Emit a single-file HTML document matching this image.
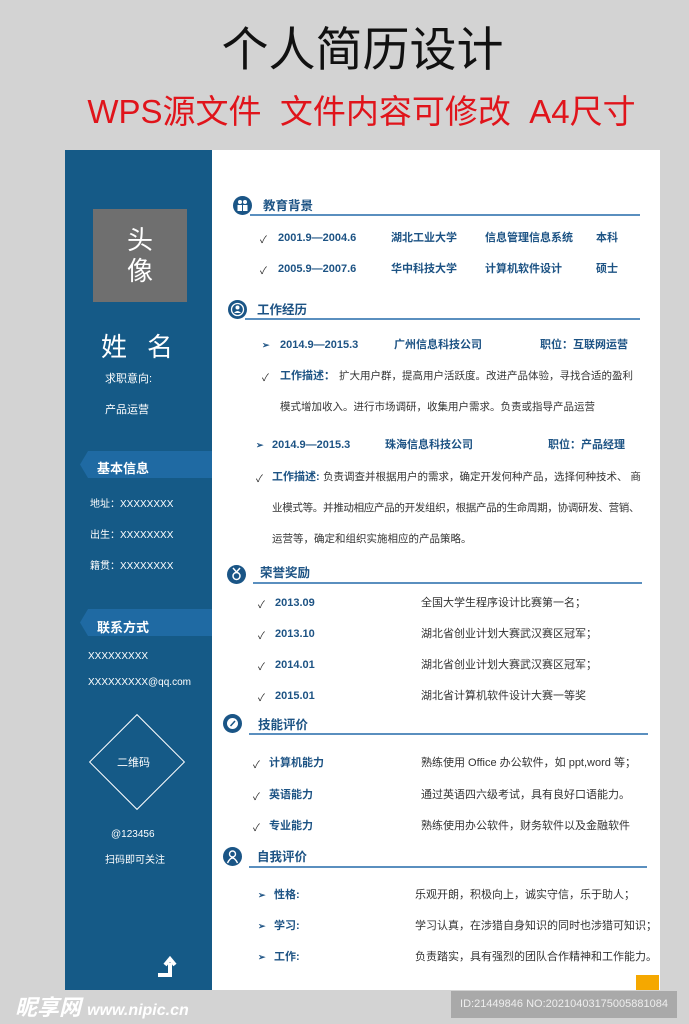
<!DOCTYPE html>
<html><head><meta charset="utf-8"><style>
*{margin:0;padding:0;box-sizing:border-box}
body{width:689px;height:1024px;background:#d3d3d3;position:relative;overflow:hidden;font-family:"Liberation Sans","Noto Sans CJK SC",sans-serif}
.a{position:absolute;white-space:nowrap}
.t{font-size:11px;color:#333;line-height:14px}
.b{font-weight:bold;color:#1d5384;font-size:11px;line-height:14px}
.w{color:#fff;font-size:10px;line-height:13px}
.h{font-weight:bold;color:#1d5384;font-size:12.5px;line-height:16px}
.ln{position:absolute;height:1.5px;background:#5a8fbf}
.ic{position:absolute;width:19px;height:19px;border-radius:50%;background:#1a5586}
.ic svg{position:absolute;left:0;top:0}
.ck{color:#222;font-size:10px}
.rib{position:absolute;left:80px;width:132px;height:27px;background:#1f6aa3;clip-path:polygon(8px 0,100% 0,100% 100%,8px 100%,0 50%)}
</style></head><body>
<div class="a" style="left:18px;width:689px;top:20px;text-align:center;font-size:47px;color:#111;line-height:60px">个人简历设计</div>
<div class="a" style="left:17px;width:689px;top:90px;text-align:center;font-size:33px;color:#e0141b;line-height:44px">WPS源文件&nbsp;&nbsp;文件内容可修改&nbsp;&nbsp;A4尺寸</div>

<div class="a" style="left:65px;top:150px;width:147px;height:840px;background:#155a87"></div>
<div class="a" style="left:212px;top:150px;width:448px;height:840px;background:#fff"></div>

<div class="a" style="left:93px;top:209px;width:94px;height:93px;background:#6f6f6f;color:#fff;font-size:26px;line-height:31px;text-align:center;padding-top:16px;white-space:normal">头<br>像</div>
<div class="a" style="left:101px;top:327px;color:#fff;font-size:26px;letter-spacing:20px">姓名</div>
<div class="a w" style="left:105px;top:373px;font-size:11px">求职意向:</div>
<div class="a w" style="left:105px;top:404px;font-size:11px">产品运营</div>
<div class="rib" style="top:451px"></div>
<div class="a" style="left:97px;top:458px;color:#fff;font-weight:bold;font-size:13px">基本信息</div>
<div class="a w" style="left:90px;top:498px">地址：XXXXXXXX</div>
<div class="a w" style="left:90px;top:529px">出生：XXXXXXXX</div>
<div class="a w" style="left:90px;top:560px">籍贯：XXXXXXXX</div>
<div class="rib" style="top:609px"></div>
<div class="a" style="left:97px;top:617px;color:#fff;font-weight:bold;font-size:13px">联系方式</div>
<div class="a w" style="left:88px;top:650px">XXXXXXXXX</div>
<div class="a w" style="left:88px;top:676px">XXXXXXXXX@qq.com</div>
<div class="a" style="left:103px;top:728px;width:68px;height:68px;border:1px solid #fff;transform:rotate(45deg)"></div>
<div class="a w" style="left:117px;top:757px;font-size:11px">二维码</div>
<div class="a w" style="left:111px;top:828px">@123456</div>
<div class="a w" style="left:105px;top:854px">扫码即可关注</div>
<svg class="a" style="left:155px;top:955px" width="24" height="24"><path d="M3 20 H15 V8 M10 10 L15 4 L20 10" stroke="#fff" stroke-width="4" fill="none"/></svg>

<!-- 教育背景 -->
<div class="ic" style="left:233px;top:196px"><svg width="19" height="19"><circle cx="7" cy="6" r="2" fill="#fff"/><circle cx="12" cy="6" r="2" fill="#fff"/><rect x="4.5" y="9" width="4.5" height="6" fill="#fff"/><rect x="10" y="9" width="4.5" height="6" fill="#fff"/></svg></div>
<div class="a h" style="left:263px;top:198px">教育背景</div>
<div class="ln" style="left:250px;top:214px;width:390px"></div>
<div class="a ck" style="left:260px;top:231px">✓</div>
<div class="a b" style="left:278px;top:231px">2001.9—2004.6</div>
<div class="a b" style="left:391px;top:231px">湖北工业大学</div>
<div class="a b" style="left:485px;top:231px">信息管理信息系统</div>
<div class="a b" style="left:596px;top:231px">本科</div>
<div class="a ck" style="left:260px;top:262px">✓</div>
<div class="a b" style="left:278px;top:262px">2005.9—2007.6</div>
<div class="a b" style="left:391px;top:262px">华中科技大学</div>
<div class="a b" style="left:485px;top:262px">计算机软件设计</div>
<div class="a b" style="left:596px;top:262px">硕士</div>

<!-- 工作经历 -->
<div class="ic" style="left:228px;top:300px"><svg width="19" height="19"><circle cx="9.5" cy="9.5" r="6" stroke="#fff" stroke-width="1.3" fill="none"/><circle cx="9.5" cy="7.5" r="2" fill="#fff"/><path d="M6 13 Q9.5 9 13 13Z" fill="#fff"/></svg></div>
<div class="a h" style="left:257px;top:302px">工作经历</div>
<div class="ln" style="left:245px;top:318px;width:395px"></div>
<div class="a b" style="left:262px;top:338px;font-size:9px">➢</div>
<div class="a b" style="left:280px;top:338px">2014.9—2015.3</div>
<div class="a b" style="left:394px;top:338px">广州信息科技公司</div>
<div class="a b" style="left:540px;top:338px">职位：互联网运营</div>
<div class="a ck" style="left:262px;top:369px">✓</div>
<div class="a b" style="left:280px;top:369px">工作描述：</div>
<div class="a t" style="left:339px;top:369px;font-size:10.5px">扩大用户群，提高用户活跃度。改进产品体验，寻找合适的盈利</div>
<div class="a t" style="left:280px;top:400px;font-size:10.5px">模式增加收入。进行市场调研，收集用户需求。负责或指导产品运营</div>
<div class="a b" style="left:256px;top:438px;font-size:9px">➢</div>
<div class="a b" style="left:272px;top:438px">2014.9—2015.3</div>
<div class="a b" style="left:385px;top:438px">珠海信息科技公司</div>
<div class="a b" style="left:548px;top:438px">职位：产品经理</div>
<div class="a ck" style="left:256px;top:470px">✓</div>
<div class="a b" style="left:272px;top:470px">工作描述:</div>
<div class="a t" style="left:323px;top:470px;font-size:10.5px">负责调查并根据用户的需求，确定开发何种产品，选择何种技术、 商</div>
<div class="a t" style="left:272px;top:501px;font-size:10.5px;letter-spacing:-0.3px">业模式等。并推动相应产品的开发组织，根据产品的生命周期，协调研发、营销、</div>
<div class="a t" style="left:272px;top:532px;font-size:10.5px">运营等，确定和组织实施相应的产品策略。</div>

<!-- 荣誉奖励 -->
<div class="ic" style="left:227px;top:565px"><svg width="19" height="19"><circle cx="9.5" cy="11" r="3.5" stroke="#fff" stroke-width="1.5" fill="none"/><path d="M6 3 L9.5 7 L13 3" stroke="#fff" stroke-width="1.5" fill="none"/></svg></div>
<div class="a h" style="left:260px;top:565px">荣誉奖励</div>
<div class="ln" style="left:253px;top:582px;width:389px"></div>
<div class="a ck" style="left:258px;top:596px">✓</div><div class="a b" style="left:275px;top:596px">2013.09</div><div class="a t" style="left:421px;top:596px">全国大学生程序设计比赛第一名；</div>
<div class="a ck" style="left:258px;top:627px">✓</div><div class="a b" style="left:275px;top:627px">2013.10</div><div class="a t" style="left:421px;top:627px">湖北省创业计划大赛武汉赛区冠军；</div>
<div class="a ck" style="left:258px;top:658px">✓</div><div class="a b" style="left:275px;top:658px">2014.01</div><div class="a t" style="left:421px;top:658px">湖北省创业计划大赛武汉赛区冠军；</div>
<div class="a ck" style="left:258px;top:689px">✓</div><div class="a b" style="left:275px;top:689px">2015.01</div><div class="a t" style="left:421px;top:689px">湖北省计算机软件设计大赛一等奖</div>

<!-- 技能评价 -->
<div class="ic" style="left:223px;top:714px"><svg width="19" height="19"><circle cx="9.5" cy="9.5" r="5.5" fill="#fff"/><path d="M7.5 12 L12 7" stroke="#1a5586" stroke-width="1.5"/></svg></div>
<div class="a h" style="left:258px;top:717px">技能评价</div>
<div class="ln" style="left:249px;top:733px;width:399px"></div>
<div class="a ck" style="left:253px;top:756px">✓</div><div class="a b" style="left:269px;top:756px">计算机能力</div><div class="a t" style="left:421px;top:756px">熟练使用 Office 办公软件，如 ppt,word 等；</div>
<div class="a ck" style="left:253px;top:788px">✓</div><div class="a b" style="left:269px;top:788px">英语能力</div><div class="a t" style="left:421px;top:788px">通过英语四六级考试，具有良好口语能力。</div>
<div class="a ck" style="left:253px;top:819px">✓</div><div class="a b" style="left:269px;top:819px">专业能力</div><div class="a t" style="left:421px;top:819px">熟练使用办公软件，财务软件以及金融软件</div>

<!-- 自我评价 -->
<div class="ic" style="left:223px;top:847px"><svg width="19" height="19"><circle cx="9.5" cy="7" r="3" stroke="#fff" stroke-width="1.4" fill="none"/><path d="M4.5 16 Q9.5 6 14.5 16" stroke="#fff" stroke-width="1.4" fill="none"/></svg></div>
<div class="a h" style="left:257px;top:849px">自我评价</div>
<div class="ln" style="left:249px;top:866px;width:398px"></div>
<div class="a b" style="left:258px;top:888px;font-size:9px">➢</div><div class="a b" style="left:274px;top:888px">性格:</div><div class="a t" style="left:415px;top:888px">乐观开朗，积极向上，诚实守信，乐于助人；</div>
<div class="a b" style="left:258px;top:919px;font-size:9px">➢</div><div class="a b" style="left:274px;top:919px">学习:</div><div class="a t" style="left:415px;top:919px">学习认真，在涉猎自身知识的同时也涉猎可知识；</div>
<div class="a b" style="left:258px;top:950px;font-size:9px">➢</div><div class="a b" style="left:274px;top:950px">工作:</div><div class="a t" style="left:415px;top:950px">负责踏实，具有强烈的团队合作精神和工作能力。</div>
<div class="a" style="left:636px;top:975px;width:23px;height:15px;background:#f5a800"></div>

<div class="a" style="left:15px;top:990px;font-size:22px;font-weight:bold;color:#fff;font-style:italic">昵享网 <span style="font-size:16px">www.nipic.cn</span></div>
<div class="a" style="left:451px;top:991px;width:226px;height:27px;background:#a9a9a9;color:#eee;font-size:11px;line-height:27px;text-align:center">ID:21449846 NO:20210403175005881084</div>
</body></html>
